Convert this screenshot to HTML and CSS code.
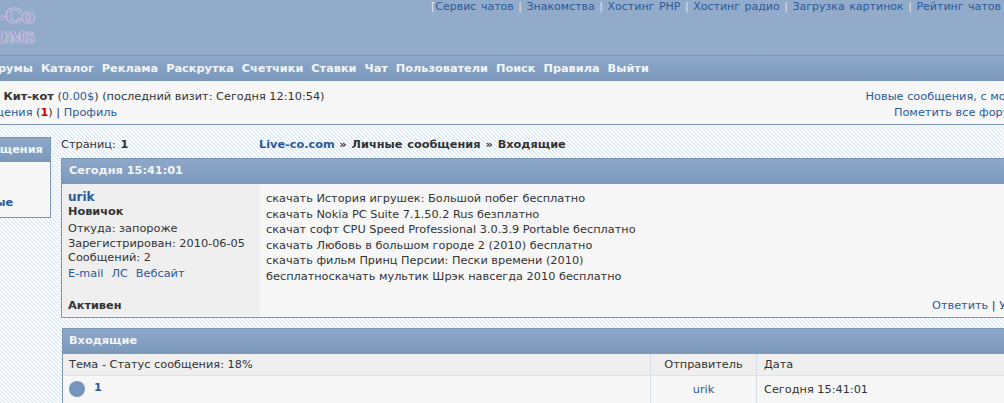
FILE: index.html
```html
<!DOCTYPE html>
<html lang="ru">
	<head>
		<meta charset="UTF-8" />
		<title>Live-co.com - Личные сообщения</title>
		<link rel="stylesheet" href="styles.css">
	</head>
	<body>
		<div class="page">
			<header class="top">
				<div class="logo"><div class="logo-main">Live-Co</div><div class="logo-sub">FORUMS</div></div>
				<div class="top-links">[<a href="#">Сервис чатов</a><i>|</i><a href="#">Знакомства</a><i>|</i><a href="#">Хостинг PHP</a><i>|</i><a href="#">Хостинг радио</a><i>|</i><a href="#">Загрузка картинок</a><i>|</i><a href="#">Рейтинг чатов</a><i>|</i><a href="#">Ещё</a>]</div>
			</header>
			<nav class="menu">
				<a href="#">Форумы</a><a href="#">Каталог</a><a href="#">Реклама</a><a href="#">Раскрутка</a><a href="#">Счетчики</a><a href="#">Ставки</a><a href="#">Чат</a><a href="#">Пользователи</a><a href="#">Поиск</a><a href="#">Правила</a><a href="#">Выйти</a>
			</nav>
			<div class="status">
				<div>
					<div>Вы вошли как <b>Кит-кот</b> (<a href="#">0.00$</a>) (последний визит: Сегодня 12:10:54)</div>
					<div><a href="#">Личные сообщения</a> (<b class="new">1</b>) | <a href="#">Профиль</a></div>
				</div>
				<div class="status-right">
					<div class="status-new"><a href="#">Новые сообщения, с момента посещения:</a></div>
					<div><a href="#">Пометить все форумы прочитанными</a></div>
				</div>
			</div>
			<div class="content">
				<aside class="side">
					<h3>Сообщения</h3>
					<div class="side-body">
						<a href="#">Новые</a>
					</div>
				</aside>
				<main class="main">
					<div class="crumbs">
						<div class="pages">Страниц: <b>1</b></div>
						<div><a href="#"><b>Live-co.com</b></a> <b>» Личные сообщения » Входящие</b></div>
					</div>
					<section class="post">
						<h2 class="bar">Сегодня 15:41:01</h2>
						<div class="post-row">
							<div class="author">
								<a class="name" href="#">urik</a>
								<div class="rank">Новичок</div>
								<div class="info">Откуда: запороже<br />Зарегистрирован: 2010-06-05<br />Сообщений: 2</div>
								<div class="contacts"><a href="#">E-mail</a><a href="#">ЛС</a><a href="#">Вебсайт</a></div>
								<div class="active">Активен</div>
							</div>
							<div class="message">
								<div class="text">скачать История игрушек: Большой побег бесплатно<br />скачать Nokia PC Suite 7.1.50.2 Rus безплатно<br />скачат софт CPU Speed Professional 3.0.3.9 Portable бесплатно<br />скачать Любовь в большом городе 2 (2010) бесплатно<br />скачать фильм Принц Персии: Пески времени (2010)<br />бесплатноскачать мультик Шрэк навсегда 2010 бесплатно</div>
								<div class="actions"><a href="#">Ответить</a> | <a href="#">Удалить</a></div>
							</div>
						</div>
					</section>
					<section class="inbox">
						<h2 class="bar">Входящие</h2>
						<div class="row row-head">
							<div class="c-topic">Тема - Статус сообщения: 18%</div>
							<div class="c-from">Отправитель</div>
							<div class="c-date">Дата</div>
						</div>
						<div class="row">
							<div class="c-topic"><span class="dot"></span><a class="topic-link" href="#"><b>1</b></a></div>
							<div class="c-from"><a href="#">urik</a></div>
							<div class="c-date">Сегодня 15:41:01</div>
						</div>
					</section>
				</main>
			</div>
		</div>
	</body>
</html>
```

FILE: styles.css
```css
html,body{
	margin:0;
	height:100%;
	overflow:hidden;
}
body{
	background-color:#f4f6f9;
	color:#333;
	font:11.3px/15.5px "DejaVu Sans",Verdana,sans-serif;
}
a{
	color:#2a5a9a;
	text-decoration:none;
}
.page{
	width:1230px;
	margin-left:-90px;
	min-height:403px;
	background-color:#fbfcfd;
	background-image:url("data:image/svg+xml,%3Csvg xmlns='http://www.w3.org/2000/svg' width='4' height='4'%3E%3Cpath fill='%23d4deea' d='M0 0h1v1H0zM1 1h1v1H1zM2 2h1v1H2zM3 3h1v1H3z'/%3E%3C/svg%3E");
}
.top{
	height:56px;
	box-sizing:border-box;
	border-bottom:1px solid #7d97b8;
	background-color:#93abca;
	position:relative;
}
.logo{
	width:88px;
	margin-left:37px;
	padding-top:4px;
	text-align:right;
	color:#a6a3cf;
	font-weight:bold;
	font-family:"DejaVu Serif",serif;
	text-shadow:0 0 1px #f2f4f9,0 0 1px #f2f4f9;
}
.logo-main{
	font-size:20px;
	line-height:24px;
}
.logo-sub{
	font-size:14px;
	line-height:20px;
}
.top-links{
	position:absolute;
	top:0;
	left:521px;
	color:#dfe7f1;
	white-space:nowrap;
	font-size:11px;
	line-height:14px;
	word-spacing:1px;
}
.top-links a{
	color:#2a5a9a;
}
.top-links i{
	font-style:normal;
	margin:0 4.5px;
}
.menu{
	display:flex;
	height:25px;
	padding-left:69px;
	gap:8px;
	align-items:center;
	background-image:linear-gradient(#8ea8ca,#7a98ba);
	font-weight:bold;
}
.menu a{
	color:#f2f5f9;
}
.status{
	display:flex;
	justify-content:space-between;
	box-sizing:border-box;
	height:44px;
	padding:7px 21px 0 7px;
	background-color:#f7f7f8;
	border-top:1px solid #eef1f5;
	border-bottom:1px solid #7d97b8;
	color:#333;
}
.status-right{
	text-align:right;
}
.status-new{
	padding-right:3px;
}
.new{
	color:#c00;
}
.content{
	display:flex;
	align-items:flex-start;
	padding:12px 0 0 56px;
}
.side{
	width:85px;
	box-sizing:border-box;
	margin-right:10px;
	border:1px solid #7d97b8;
	background-color:#f7f7f8;
}
.side h3,.bar{
	margin:0;
	height:25px;
	padding-left:7px;
	font-size:inherit;
	line-height:24px;
	color:#f2f5f9;
	font-weight:bold;
	background-image:linear-gradient(#8ea8ca,#7a98ba);
}
.side h3{
	height:24px;
	padding-left:1px;
}
.side-body{
	height:55px;
	padding-left:4px;
	font-weight:bold;
	line-height:82px;
	overflow:hidden;
}
.main{
	flex:1;
}
.crumbs{
	display:flex;
	height:21px;
	line-height:15px;
	word-spacing:1px;
}
.pages{
	width:198px;
}
.post,.inbox{
	border:1px solid #7d97b8;
	background-color:#f7f7f8;
}
.post{
	margin-bottom:10px;
}
.post-row{
	display:flex;
	height:133px;
}
.author{
	width:192px;
	padding:6px 0 0 6px;
	background-color:#efefef;
}
.name{
	font-size:12px;
	font-weight:bold;
	line-height:15px;
	display:block;
}
.rank,.active{
	font-weight:bold;
}
.rank{
	line-height:14px;
	margin-bottom:3px;
}
.info{
	line-height:14.5px;
}
.contacts{
	display:flex;
	gap:8px;
}
.active{
	margin-top:17px;
}
.message{
	flex:1;
	padding:7px 6px 0;
	position:relative;
}
.actions{
	position:absolute;
	bottom:4px;
	left:672px;
	white-space:nowrap;
}
.inbox{
	border-bottom:0;
	margin-left:1px;
}
.inbox .bar{
	padding-left:6px;
}
.row{
	display:flex;
	height:27px;
	line-height:27px;
}
.row-head{
	height:21px;
	line-height:22px;
	background-color:#efefef;
	border-bottom:1px solid #dde3ea;
}
.c-topic{
	width:581px;
	padding-left:6px;
	display:flex;
	align-items:center;
}
.c-from{
	width:105px;
	text-align:center;
	border-left:1px solid #d5dde8;
}
.c-date{
	flex:1;
	padding-left:7px;
	border-left:1px solid #d5dde8;
}
.dot{
	width:16px;
	height:16px;
	border-radius:50%;
	background-color:#7595bc;
	margin:0 9px 2px 0;
}
.topic-link{
	margin-bottom:5px;
}
```
